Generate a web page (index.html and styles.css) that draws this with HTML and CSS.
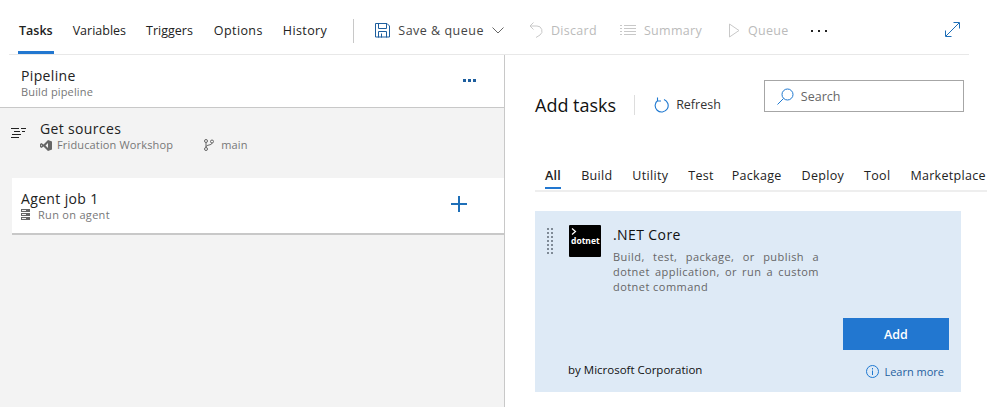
FILE: index.html
```html
<!DOCTYPE html>
<html>
<head>
<title>Pipeline tasks</title>
<meta charset="utf-8" />
<link rel="stylesheet" href="styles.css">
</head>
<body>
<div class="toolbar">
  <a class="tab active">Tasks</a>
  <a class="tab">Variables</a>
  <a class="tab triggers">Triggers</a>
  <a class="tab wide">Options</a>
  <a class="tab wide">History</a>
  <span class="sep"></span>
  <span class="cmd save">
    <svg width="15" height="15" viewBox="0 0 15 15" fill="none" stroke="#1e5f9e"><path d="M.5.5h11.5l2.500 2.500v11H.5zM3.500.5v5h8v-5M3.500 14.500v-6h8v6M6.500 10.500v4"/></svg>
    Save &amp; queue
    <svg class="chev" width="12" height="7" viewBox="0 0 12 7" fill="none" stroke="#666"><path d="M.5.500l5.500 5.500 5.500-5.500"/></svg>
  </span>
  <span class="cmd off discard">
    <svg width="14" height="16" viewBox="0 0 14 16" fill="none" stroke="#c8c8c8"><path d="M4.500.5L1 4l3.500 3.500M1 4h7a5 5 0 0 1 3 9l-4 2.500"/></svg>
    Discard
  </span>
  <span class="cmd off summary">
    <svg width="16" height="12" viewBox="0 0 16 12" fill="none" stroke="#c8c8c8"><path d="M0 1.500h2M4 1.500h12M0 4.500h2M4 4.500h12M0 7.500h2M4 7.500h12M0 10.500h2M4 10.500h12"/></svg>
    Summary
  </span>
  <span class="cmd off queue">
    <svg width="11" height="15" viewBox="0 0 11 15" fill="none" stroke="#c8c8c8"><path d="M.5 1l9.500 6.500-9.500 6.500z"/></svg>
    Queue
  </span>
  <span class="more">
    <i></i><i></i><i></i>
  </span>
  <svg class="expand" width="15" height="15" viewBox="0 0 15 15" fill="none" stroke="#1e6fb8"><path d="M1 14L14 1M8.500.5h6v6M.5 8.500v6h6"/></svg>
</div>

<div class="main">
  <div class="left">
    <div class="pipeline">
      <div>
        <div class="name">Pipeline</div>
        <div class="sub">Build pipeline</div>
      </div>
      <span class="pipe-more"><i></i><i></i><i></i></span>
    </div>
    <div class="sources">
      <svg class="src-icon" width="15" height="13" viewBox="0 0 15 13" fill="none" stroke="#222"><path d="M0 1.500h8M10 1.500h5M3 4.500h6M11 4.500h3M1 7.500h9M0 10.500h8"/></svg>
      <div>
        <div class="name">Get sources</div>
        <div class="sub src-sub">
          <svg width="12" height="11" viewBox="0 0 12 11"><path fill="#666" d="M8 0l4 1.500v8L8 11 3.500 6.500 1.500 8 0 7V4l1.500-1 2 1.500zM8 3L5.500 5.500 8 8zM1.200 4.500v2l1-1z"/></svg>
          <span class="src-repo">Friducation Workshop</span>
          <svg class="branch" width="10" height="12" viewBox="0 0 10 12" fill="none" stroke="#666"><circle cx="2" cy="2" r="1.500"/><circle cx="8" cy="2.500" r="1.500"/><circle cx="2" cy="10" r="1.500"/><path d="M2 3.500v5M8 4c0 2.500-6 1.500-6 4"/></svg>
          <span>main</span>
        </div>
      </div>
    </div>
    <div class="job">
      <div>
        <div class="name">Agent job 1</div>
        <div class="sub job-sub">
          <svg width="9" height="11" viewBox="0 0 9 11"><path fill="#666" d="M0 0h9v3H0zM0 4h9v3H0zM0 8h9v3H0z"/><path fill="#f4f4f4" d="M1 1h4v1H1zM1 5h4v1H1zM1 9h4v1H1z"/></svg>
          Run on agent
        </div>
      </div>
      <svg class="plus" width="16" height="16" viewBox="0 0 16 16"><path fill="#1e6fb8" d="M7 0h2v7h7v2H9v7H7V9H0V7h7z"/></svg>
    </div>
  </div>

  <div class="right">
    <div class="add-head">
      <span class="add-title">Add tasks</span>
      <span class="add-sep"></span>
      <svg width="15" height="16" viewBox="0 0 15 16" fill="none" stroke="#1e78d0" stroke-width="1.100"><path d="M4 3.200A6.500 6.500 0 1 0 10 2.500M3.500 .5v3.500H7"/></svg>
      <span class="refresh">Refresh</span>
      <div class="search">
        <svg width="17" height="17" viewBox="0 0 17 17" fill="none" stroke="#1e78d0"><circle cx="10.500" cy="6.500" r="5.500"/><path d="M6.500 10.500L.5 16.500"/></svg>
        <span>Search</span>
      </div>
    </div>
    <div class="filters">
      <a class="filter active">All</a>
      <a class="filter">Build</a>
      <a class="filter">Utility</a>
      <a class="filter test">Test</a>
      <a class="filter">Package</a>
      <a class="filter">Deploy</a>
      <a class="filter">Tool</a>
      <a class="filter">Marketplace</a>
    </div>
    <div class="card">
      <div class="card-top">
        <div class="grip"><i></i><i></i><i></i><i></i><i></i><i></i><i></i><i></i><i></i><i></i><i></i><i></i><i></i><i></i></div>
        <div class="logo">
          <svg width="6" height="7" viewBox="0 0 6 7" fill="none" stroke="#fff" stroke-width="1.200"><path d="M1 .5L4.500 3.500 1 6.500"/></svg>
          <span>dotnet</span>
        </div>
        <div class="card-text">
          <div class="card-title">.NET Core</div>
          <div class="card-desc">Build, test, package, or publish a dotnet application, or run a custom dotnet command</div>
        </div>
      </div>
      <div class="card-btn"><button class="add">Add</button></div>
      <div class="card-foot">
        <span class="by">by Microsoft Corporation</span>
        <span class="learn">
          <svg width="13" height="13" viewBox="0 0 13 13" fill="none" stroke="#1e78d0"><circle cx="6.500" cy="6.500" r="6"/><path d="M6.500 5.500v4.500M6.500 3v1.500"/></svg>
          Learn more
        </span>
      </div>
    </div>
  </div>
</div>
</body>
</html>
```

FILE: styles.css
```css
body {
  margin:0;
  width:987px;
  height:407px;
  overflow:hidden;
  background:#fff;
  color:#222;
  font-family:'Open Sans', 'Noto Sans', sans-serif;
  font-size:12.5px;
}

i {
  display:block;
}

.toolbar {
  display:flex;
  align-items:center;
  width:951px;
  height:54px;
  margin:0 18px 0 9px;
  padding-left:9px;
  border-bottom:1px solid #e8e8e8;
}

.tab {
  height:54px;
  line-height:62px;
  padding:0 1px;
  margin-right:18px;
  box-sizing:border-box;
}

.tab.triggers {
  margin-right:19px;
}

.tab.wide {
  letter-spacing:.4px;
}

.tab.active {
  font-weight:600;
  border-bottom:3px solid #2277d0;
}

.sep {
  width:1px;
  height:24px;
  margin:7px 21px 0 7px;
  background:#c8c8c8;
}

.cmd {
  display:flex;
  align-items:center;
  gap:8px;
  margin-top:6px;
  color:#444;
  letter-spacing:.3px;
}

.cmd.off {
  color:#bbb;
}

.save {
  letter-spacing:.5px;
}

.discard {
  margin-left:25px;
}

.summary {
  margin-left:23px;
}

.queue {
  margin-left:27px;
}

.more {
  display:flex;
  gap:5px;
  margin:8px 0 0 22px;
}

.more i {
  width:2px;
  height:2px;
  background:#222;
}

.expand {
  margin:5px 9px 0 auto;
}

.main {
  display:flex;
  height:352px;
}

.left {
  width:504px;
  border-right:1px solid #c8c8c8;
  background:#f3f3f3;
  flex:none;
}

.name {
  font-size:14px;
  line-height:18px;
  letter-spacing:.35px;
}

.sub {
  font-size:11px;
  line-height:14px;
  color:#777;
  letter-spacing:.15px;
}

.pipeline {
  display:flex;
  justify-content:space-between;
  align-items:center;
  height:48px;
  padding:4px 28px 0 21px;
  background:#fff;
  border-bottom:1px solid #c8c8c8;
}

.pipe-more {
  display:flex;
  gap:2px;
  margin-top:-5px;
}

.pipe-more i {
  width:3px;
  height:3px;
  background:#1e5f9e;
}

.sources {
  display:flex;
  height:70px;
  padding:12px 0 0 11px;
  box-sizing:border-box;
}

.src-icon {
  margin:7px 14px 0 0;
}

.src-sub {
  display:flex;
  align-items:center;
}

.src-repo {
  margin:0 31px 0 5px;
}

.branch {
  margin-right:7px;
}

.job {
  display:flex;
  justify-content:space-between;
  align-items:center;
  height:55px;
  margin-left:12px;
  padding:0 37px 0 9px;
  background:#fff;
  border-bottom:2px solid #c8c8c8;
}

.job-sub {
  display:flex;
  align-items:center;
  gap:8px;
  letter-spacing:.3px;
}

.plus {
  margin-top:-3px;
}

.right {
  flex:1;
  min-width:0;
  padding-left:30px;
}

.add-head {
  display:flex;
  align-items:center;
  height:57px;
  margin-top:21px;
}

.add-title {
  font-size:18px;
  color:#111;
}

.add-sep {
  width:1px;
  height:20px;
  margin:0 19px 0 18px;
  background:#ddd;
}

.refresh {
  margin-left:7px;
  color:#333;
}

.search {
  display:flex;
  align-items:center;
  gap:7px;
  width:186px;
  height:30px;
  margin:-17px 0 0 43px;
  padding-left:12px;
  border:1px solid #a6a6a6;
  color:#666;
}

.filters {
  display:flex;
  width:472px;
  height:27px;
  margin-top:30px;
  padding-left:10px;
  border-bottom:2px solid #eee;
}

.filter {
  height:26px;
  margin-right:20px;
  white-space:nowrap;
  line-height:25px;
  letter-spacing:.3px;
}

.filter.test {
  margin-right:18px;
}

.filter.active {
  box-sizing:border-box;
  font-weight:600;
  border-bottom:2px solid #2277d0;
}

.card {
  display:flex;
  flex-direction:column;
  width:426px;
  height:181px;
  margin-top:19px;
  padding:14px 12px 0;
  box-sizing:border-box;
  background:#deeaf6;
}

.card-top {
  display:flex;
  height:93px;
}

.grip {
  display:grid;
  grid-template-columns:2px 2px;
  grid-auto-rows:2px;
  gap:2px;
  width:6px;
  height:28px;
  margin:3px 16px 0 0;
}

.grip i {
  background:#7f8a96;
}

.logo {
  display:flex;
  flex-direction:column;
  width:32px;
  height:32px;
  background:#000;
  border-radius:1px;
  color:#fff;
  padding:3px 0 0 2px;
  box-sizing:border-box;
  font-size:8.5px;
  font-weight:700;
  line-height:11px;
}

.card-text {
  width:206px;
  margin-left:12px;
}

.card-title {
  margin-top:1px;
  font-size:14px;
  line-height:18px;
  color:#111;
  letter-spacing:.4px;
}

.card-desc {
  margin-top:5px;
  font-size:11px;
  line-height:15px;
  color:#666;
  text-align:justify;
  letter-spacing:.45px;
}

.card-btn {
  display:flex;
  justify-content:flex-end;
}

.add {
  width:106px;
  height:32px;
  border:0;
  background:#2277d0;
  color:#fff;
  font:600 12.5px 'Open Sans', sans-serif;
}

.card-foot {
  display:flex;
  justify-content:space-between;
  margin-top:12px;
  padding-left:21px;
}

.by {
  font-size:11.5px;
  color:#111;
}

.learn {
  display:flex;
  align-items:center;
  gap:5px;
  padding-right:5px;
  margin-top:2px;
  font-size:11px;
  color:#1e5f9e;
}
```
